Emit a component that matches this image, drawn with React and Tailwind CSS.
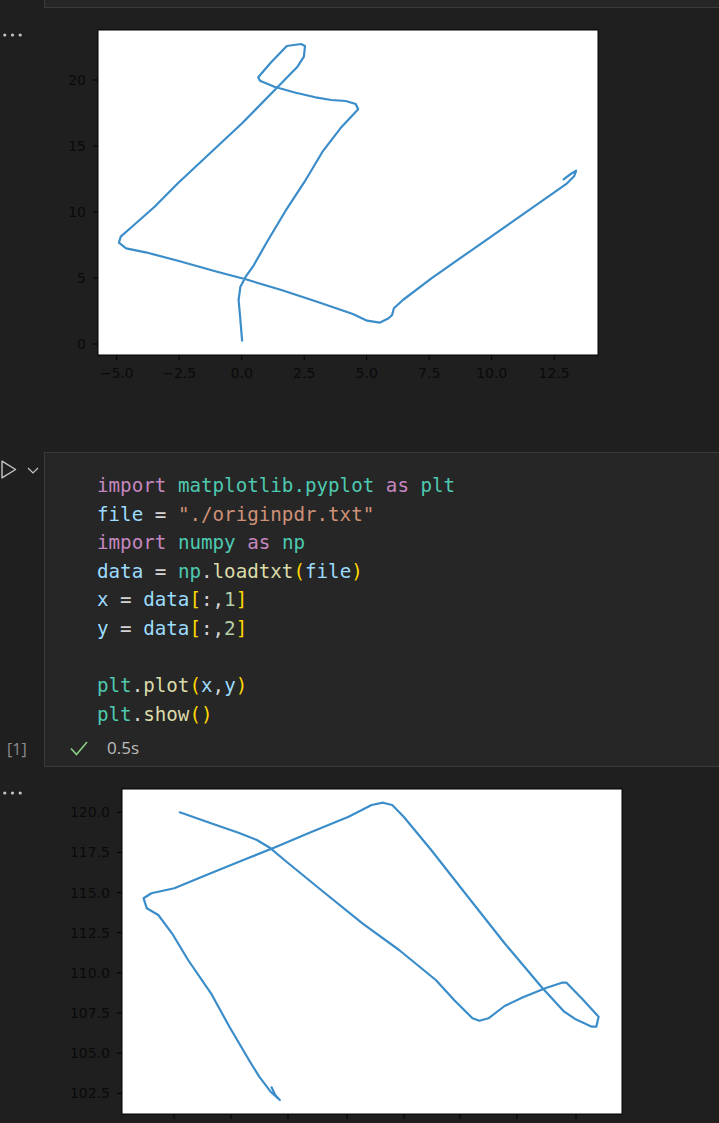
import React from 'react';

// trace of the first figure, in page pixels
const pathA = [
  [242.1, 340.7], [240.4, 320], [238.6, 300], [240.4, 286.7], [245.7, 276.7], [252.9, 266.7],
  [267.1, 241.7], [285, 211.7], [304.6, 181.7], [322.5, 151.7], [340.4, 128.3], [358.2, 109.3],
  [355.7, 104], [345.7, 101], [331.4, 100], [315.4, 97.3], [295.7, 92.7], [274.3, 86.7],
  [260, 80.7], [258.2, 77.3], [270.7, 62.7], [286.8, 46], [301, 44], [305, 46], [303.9, 56.7],
  [297.5, 66.7], [277.9, 86.7], [242.1, 123.3], [210, 153.3], [177.9, 183.3], [154.6, 206.7],
  [131.4, 227.3], [120.7, 236.7], [118.9, 242.7], [126.1, 248.3], [145.7, 252.3], [177.9, 260.7],
  [217.1, 271.7], [245.7, 279.3], [281.4, 290], [317.1, 301.7], [352.9, 314], [367.1, 320.7],
  [379.6, 322.7], [388.6, 318.3], [392.1, 315], [393.9, 308.3], [402.9, 300], [431.4, 278.3],
  [474.3, 248.3], [510, 223.3], [545.7, 198.3], [567.1, 183.3], [574.3, 176], [576.1, 170.7],
  [570.7, 174], [563.6, 179.3],
];

const pathB = [
  [179.8, 812.3], [211, 823.3], [238.5, 832.7], [256.9, 840], [270.6, 848.3], [284.4, 860],
  [321.1, 890], [362.4, 923.3], [399.1, 950], [435.8, 980], [454.1, 1000], [472.5, 1018.3],
  [479.4, 1020.7], [488.5, 1018.3], [504.6, 1006], [523, 997.3], [545.9, 988], [561.9, 982.7],
  [566.5, 982.7], [582.6, 999.3], [598.6, 1016.7], [596.3, 1026.7], [591.7, 1026.7], [575.7, 1019.3],
  [564.2, 1011.7], [541.3, 986.7], [504.6, 943.3], [467.9, 896.7], [431.2, 850], [403.7, 816.7],
  [392.2, 805], [383, 802.7], [371.6, 805], [348.6, 816.7], [311.9, 831.7], [275.2, 847.3],
  [247.7, 858.3], [206.4, 875], [174.3, 888.3], [151.4, 893.3], [143.6, 898.3], [146.8, 908.3],
  [158.3, 915], [172, 933.3], [188.1, 960], [211, 993.3], [229.4, 1026.7], [250, 1061.7],
  [259.2, 1076.7], [270.6, 1091.7], [279.8, 1100], [275.2, 1095], [271.6, 1087.3],
];

const pts = (list) => list.map(([x, y]) => `${x},${y}`).join(' ');

const K = 'text-[#c586c0]';
const M = 'text-[#4ec9b0]';
const V = 'text-[#9cdcfe]';
const O = 'text-[#d4d4d4]';
const S = 'text-[#ce9178]';
const F = 'text-[#dcdcaa]';
const B = 'text-[#ffd700]';
const N = 'text-[#b5cea8]';

const code = [
  [[K, 'import'], [O, ' '], [M, 'matplotlib.pyplot'], [O, ' '], [K, 'as'], [O, ' '], [M, 'plt']],
  [[V, 'file'], [O, ' = '], [S, '"./originpdr.txt"']],
  [[K, 'import'], [O, ' '], [M, 'numpy'], [O, ' '], [K, 'as'], [O, ' '], [M, 'np']],
  [[V, 'data'], [O, ' = '], [M, 'np'], [O, '.'], [F, 'loadtxt'], [B, '('], [V, 'file'], [B, ')']],
  [[V, 'x'], [O, ' = '], [V, 'data'], [B, '['], [O, ':,'], [N, '1'], [B, ']']],
  [[V, 'y'], [O, ' = '], [V, 'data'], [B, '['], [O, ':,'], [N, '2'], [B, ']']],
  [],
  [[M, 'plt'], [O, '.'], [F, 'plot'], [B, '('], [V, 'x'], [O, ','], [V, 'y'], [B, ')']],
  [[M, 'plt'], [O, '.'], [F, 'show'], [B, '()']],
];

function Dots() {
  return (
    <svg width="24" height="6" viewBox="0 0 24 6" className="block">
      <circle cx="4.8" cy="3" r="1.6" fill="#c5c5c5" />
      <circle cx="12.5" cy="3" r="1.6" fill="#c5c5c5" />
      <circle cx="20.2" cy="3" r="1.6" fill="#c5c5c5" />
    </svg>
  );
}

const labelFont = { fontFamily: '"DejaVu Sans", sans-serif' };
const lineColor = '#3b8dca';

function FigureOne() {
  const yTicks = [[344, '0'], [278, '5'], [212, '10'], [146, '15'], [80, '20']];
  const xTicks = ['−5.0', '−2.5', '0.0', '2.5', '5.0', '7.5', '10.0', '12.5'];
  return (
    <svg width="675" height="444" viewBox="44 8 675 444" className="block">
      <rect x="98" y="30" width="500" height="325" fill="#ffffff" stroke="#000" strokeWidth="1" />
      <g stroke="#000" strokeWidth="1">
        {yTicks.map(([y]) => <line key={y} x1="93" x2="98" y1={y} y2={y} />)}
        {xTicks.map((t, i) => {
          const x = 116.7 + i * 62.5;
          return <line key={t} x1={x} x2={x} y1="355" y2="360" />;
        })}
      </g>
      <g fill="#0a0a0a" fontSize="14" style={labelFont}>
        {yTicks.map(([y, t]) => (
          <text key={t} x="86" y={y + 5} textAnchor="end">{t}</text>
        ))}
        {xTicks.map((t, i) => (
          <text key={t} x={116.7 + i * 62.5} y="378" textAnchor="middle">{t}</text>
        ))}
      </g>
      <polyline points={pts(pathA)} fill="none" stroke={lineColor} strokeWidth="2.2" strokeLinejoin="round" strokeLinecap="round" />
    </svg>
  );
}

function FigureTwo() {
  const yTicks = ['120.0', '117.5', '115.0', '112.5', '110.0', '107.5', '105.0', '102.5'];
  const xTicks = [174, 231, 288, 347, 404, 460, 517, 576];
  return (
    <svg width="675" height="356" viewBox="44 767 675 356" className="block">
      <rect x="122" y="789" width="500" height="325" fill="#ffffff" stroke="#000" strokeWidth="1" />
      <g stroke="#000" strokeWidth="1">
        {yTicks.map((t, i) => {
          const y = 812.3 + i * 40.14;
          return <line key={t} x1="117" x2="122" y1={y} y2={y} />;
        })}
        {xTicks.map((x) => <line key={x} x1={x} x2={x} y1="1114" y2="1119" />)}
      </g>
      <g fill="#0a0a0a" fontSize="14" style={labelFont}>
        {yTicks.map((t, i) => (
          <text key={t} x="110" y={812.3 + i * 40.14 + 5} textAnchor="end">{t}</text>
        ))}
      </g>
      <polyline points={pts(pathB)} fill="none" stroke={lineColor} strokeWidth="2.2" strokeLinejoin="round" strokeLinecap="round" />
    </svg>
  );
}

function CodeCell() {
  return (
    <div className="flex h-[315px]">
      <div className="w-[44px] flex flex-col justify-between pb-[6px]">
        <div className="flex items-center gap-[10px] pt-[8px] pl-[1px]">
          <svg width="16" height="19" viewBox="0 0 16 19">
            <path d="M1 1.2 L14.6 9.5 L1 17.8 Z" fill="none" stroke="#c5c5c5" strokeWidth="1.4" strokeLinejoin="round" />
          </svg>
          <svg width="12" height="7" viewBox="0 0 12 7" className="mt-[1px]">
            <path d="M1 1 L6 6 L11 1" fill="none" stroke="#c5c5c5" strokeWidth="1.2" />
          </svg>
        </div>
        <div className="h-[24px] flex items-center pl-[7px] text-[16px] text-[#8c8c8c]" style={{ fontFamily: '"Open Sans", sans-serif' }}>
          [1]
        </div>
      </div>
      <div className="flex-1 bg-[#262626] border-l border-t border-b border-[#3b3b3b] pt-[19px] pb-[6px] flex flex-col">
        <div className="pl-[52px] text-[19.2px] leading-[28.6px] whitespace-pre" style={{ fontFamily: '"DejaVu Sans Mono", monospace' }}>
          {code.map((line, i) => (
            <div key={i} className="h-[28.6px]">
              {line.map(([c, t], j) => <span key={j} className={c}>{t}</span>)}
            </div>
          ))}
        </div>
        <div className="mt-auto h-[24px] flex items-center pl-[25px]">
          <svg width="18" height="15" viewBox="0 0 18 15">
            <path d="M1 7.5 L6.5 13.5 L17 1" fill="none" stroke="#89d185" strokeWidth="1.6" />
          </svg>
          <span className="ml-[19px] text-[17px] text-[#bdbdbd]" style={{ fontFamily: '"Open Sans", sans-serif' }}>0.5s</span>
        </div>
      </div>
    </div>
  );
}

export default function App() {
  return (
    <div className="w-[719px] h-[1123px] overflow-hidden bg-[#1f1f1f]">
      <div className="ml-[44px] h-[8px] bg-[#262626] border-l border-b border-[#3b3b3b]" />
      <div className="flex h-[444px]">
        <div className="w-[44px] pt-[24px]"><Dots /></div>
        <FigureOne />
      </div>
      <CodeCell />
      <div className="flex h-[356px]">
        <div className="w-[44px] pt-[23px]"><Dots /></div>
        <FigureTwo />
      </div>
    </div>
  );
}
